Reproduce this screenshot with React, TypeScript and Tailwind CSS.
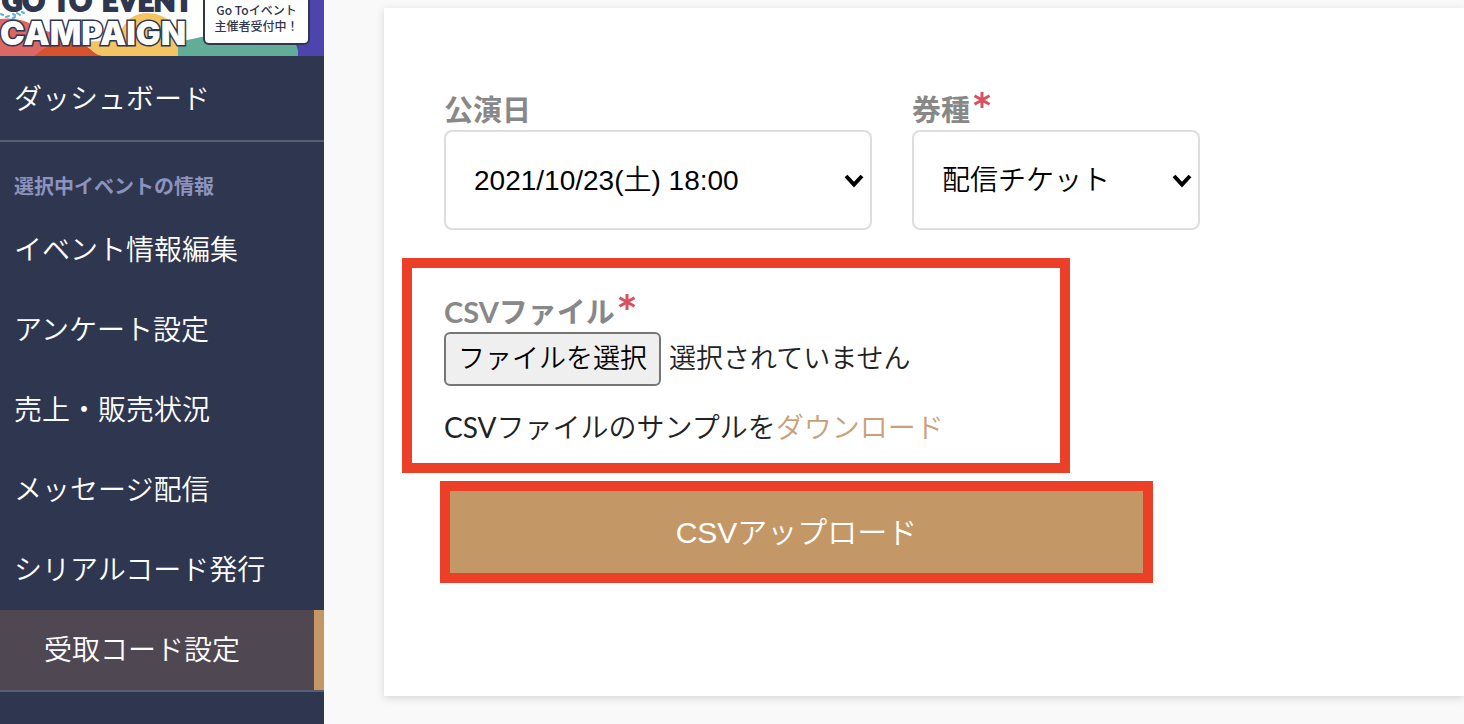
import type { ReactNode } from "react";

const menuItems = [
  "イベント情報編集",
  "アンケート設定",
  "売上・販売状況",
  "メッセージ配信",
  "シリアルコード発行",
];

function CampaignBanner() {
  return (
    <a href="#campaign" className="relative block h-14 overflow-hidden bg-white">
      <svg viewBox="0 0 324 56" className="block h-14 w-[324px]">
        <path d="M0 19C14 17 28 20 38 29L50 32L62 40V56H0Z" fill="#dc6763" />
        <path d="M116 56C116 30 128 13 147 13C164 13 176 24 184 40V56Z" fill="#f5c462" />
        <path d="M84 42L178 36V56H100Q90 50 84 42Z" fill="#f5c462" />
        <path d="M34 56C46 46 58 40 72 40C86 40 90 53 102 56Z" fill="#d8532c" />
        <path d="M178 42L206 36H294C297 43 298 50 298 56H178Z" fill="#63ac98" />
        <path d="M290 0H324V56H298C298 50 297 46 294 40Z" fill="#4e44ae" />
        <g stroke="#5bb0dc" strokeWidth="2" strokeLinecap="round">
          <path d="M1 14l2 1M6 17l3 -1M13 14l2 1M17 13l3 2M22 12l2 1M13 18l2 -1" />
        </g>
        <g fontWeight="900" stroke="#2f3650">
          <g fontFamily="Lato, sans-serif" fontSize="28" fill="#2f3650">
            <text x="2" y="11" strokeWidth="2">GO</text>
            <text x="53" y="11" strokeWidth="2">TO</text>
            <text x="102" y="11" strokeWidth="2">EVENT</text>
          </g>
          <text x="0" y="45" fontFamily="Inter, sans-serif" fontSize="33" fill="#ffffff" strokeWidth="3" paintOrder="stroke">
            CAMPAIGN
          </text>
        </g>
      </svg>
      <span className="absolute -top-3 left-[203px] flex h-[57px] w-[107px] flex-col justify-end rounded-md border-2 border-[#2f3650] bg-white pb-[9px] text-center font-['Noto_Sans_CJK_JP',sans-serif] text-[12px] leading-4 font-medium text-[#2f3650]">
        <span>Go Toイベント</span>
        <span>主催者受付中！</span>
      </span>
    </a>
  );
}

function Sidebar() {
  return (
    <aside className="w-[324px] shrink-0 bg-[#2f3650] text-[28px] leading-10 font-[350] text-white">
      <CampaignBanner />
      <nav>
        <a href="#dashboard" className="block border-b-2 border-[#5a5e73] px-3.5 py-[22px]">
          ダッシュボード
        </a>
        <h2 className="px-3.5 pt-[29px] pb-[9px] text-[20px] leading-[30px] font-bold text-[#8c93bd]">
          選択中イベントの情報
        </h2>
        <ul>
          {menuItems.map((item) => (
            <li key={item}>
              <a href="#menu" className="block px-3.5 pt-[19px] pb-[21px]">
                {item}
              </a>
            </li>
          ))}
          <li className="border-b-2 border-[#5a5e73]">
            <a
              href="#codes"
              aria-current="page"
              className="block border-r-10 border-[#c49766] bg-[#4f4853] pt-[19px] pb-[21px] pl-11"
            >
              受取コード設定
            </a>
          </li>
        </ul>
      </nav>
    </aside>
  );
}

function FieldLabel({ htmlFor, required, children }: { htmlFor: string; required?: boolean; children: ReactNode }) {
  return (
    <label htmlFor={htmlFor} className="flex h-10 items-start text-[29px] leading-10 font-bold text-[#888888]">
      {children}
      {required && (
        <svg viewBox="0 0 20 20" className="ml-0.5 size-5" stroke="#d94f5c" strokeWidth="3" aria-hidden="true">
          <path d="M10 2V18M2.5 5.700L17.5 14.300M17.5 5.700L2.5 14.300" />
        </svg>
      )}
    </label>
  );
}

function SelectField({ id, label, required, option, width }: { id: string; label: string; required?: boolean; option: string; width: string }) {
  return (
    <div>
      <FieldLabel htmlFor={id} required={required}>
        {label}
      </FieldLabel>
      <div className={`relative ${width}`}>
        <select
          id={id}
          className="block h-[100px] w-full appearance-none rounded-lg border-2 border-[#dddddd] bg-white px-7 pt-0.5 font-['Liberation_Sans','Noto_Sans_CJK_JP',sans-serif] text-[28px] font-[350] text-black"
        >
          <option>{option}</option>
        </select>
        <svg
          viewBox="0 0 20 14"
          className="pointer-events-none absolute top-11 right-2 h-[14px] w-5"
          fill="none"
          stroke="#000000"
          strokeWidth="4"
          aria-hidden="true"
        >
          <path d="M2 2L10 10.500L18 2" />
        </svg>
      </div>
    </div>
  );
}

export default function App() {
  return (
    <div className="flex min-h-screen overflow-hidden bg-[#f9f9f9] font-['Lato','Noto_Sans_CJK_JP',sans-serif] text-[#222222]">
      <Sidebar />
      <main className="min-w-0 flex-1 pt-2 pb-7 pl-[60px]">
        <form className="h-full bg-white px-[60px] pt-[82px] shadow-[0_2px_8px_rgba(0,0,0,0.15)]">
          <div className="flex gap-10">
            <SelectField id="date" label="公演日" option="2021/10/23(土) 18:00" width="w-[428px]" />
            <SelectField id="ticket" label="券種" required option="配信チケット" width="w-72" />
          </div>

          <section className="mt-7 -ml-[42px] max-w-[668px] border-10 border-[#eb4027] px-8 pt-6 pb-4">
            <FieldLabel htmlFor="csv" required>
              CSVファイル
            </FieldLabel>
            <div className="flex items-center gap-2 text-[27px] leading-10 font-[350]">
              <input id="csv" type="file" className="peer sr-only" />
              <label
                htmlFor="csv"
                className="rounded-md border-2 border-[#767676] bg-[#efefef] px-3 pt-1 pb-1.5 text-black"
              >
                ファイルを選択
              </label>
              <span className="pb-0.5">選択されていません</span>
            </div>
            <p className="mt-[21px] text-[28px] leading-10 font-[350]">
              <span className="font-normal">CSV</span>ファイルのサンプルを
              <a href="#sample" className="text-[#c9a07a]">
                ダウンロード
              </a>
            </p>
          </section>

          <button
            type="button"
            className="mt-2 -ml-1 block h-[102px] w-full max-w-[713px] border-10 border-[#eb4027] bg-[#c49766] font-['Liberation_Sans','Noto_Sans_CJK_JP',sans-serif] text-[30px] font-[350] text-white"
          >
            CSVアップロード
          </button>
        </form>
      </main>
    </div>
  );
}
